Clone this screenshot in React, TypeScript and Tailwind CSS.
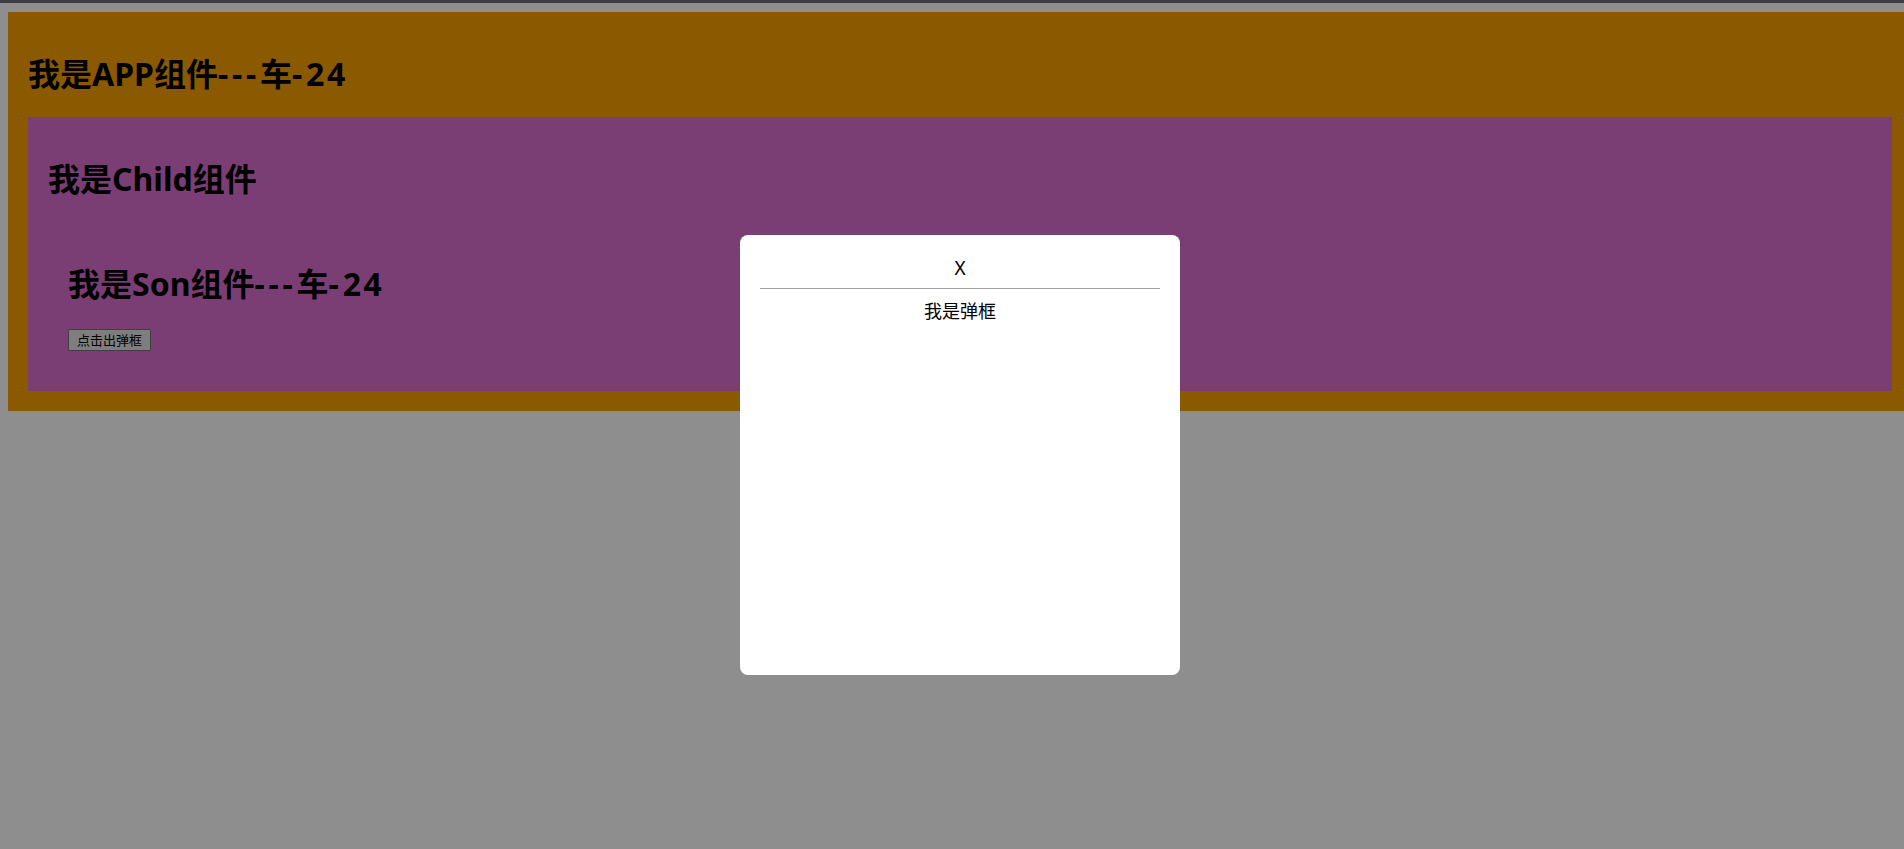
import React from 'react';

const font = { fontFamily: '"Noto Sans", "Noto Sans CJK SC", sans-serif' };

// the reference font draws hyphens and digits wider than Noto Sans does
const Wide: React.FC<{ children: React.ReactNode; dash?: boolean }> = ({ children, dash }) => (
  <span className={dash ? 'tracking-[3.8px]' : 'tracking-[2.6px]'}>{children}</span>
);

const Heading: React.FC<{ children: React.ReactNode }> = ({ children }) => (
  <h1 className="my-[21.44px] text-[32px] leading-[42px] font-bold text-black">{children}</h1>
);

const Son: React.FC = () => (
  <div className="p-[20px]">
    <Heading>
      我是Son组件<Wide dash>---</Wide>车<Wide dash>-</Wide><Wide>24</Wide>
    </Heading>
    <button className="h-[22px] px-[8px] text-[13px] leading-[20px] text-black bg-[#7e7e7e] border border-[#3f3f3f] rounded-[2px]">
      点击出弹框
    </button>
  </div>
);

const Child: React.FC = () => (
  <div className="bg-[#7a3e74] p-[20px]">
    <Heading>我是Child组件</Heading>
    <Son />
  </div>
);

const Modal: React.FC = () => (
  <div className="fixed left-[740px] top-[235px] w-[440px] h-[440px] bg-white rounded-[8px] p-[20px] text-center text-black">
    <div className="pt-[1px] text-[19px] leading-[24px]">X</div>
    <hr className="my-[8px] border-0 border-t border-[#a3a3a3]" />
    <p className="pt-[2px] text-[18px] leading-[24px]">我是弹框</p>
  </div>
);

export default function App() {
  return (
    <div className="min-h-screen bg-[#8e8e8e] overflow-hidden" style={font}>
      <div className="h-[3px] bg-[#3c3e44]" />
      <div className="pt-[9px] pl-[8px]">
        <div className="bg-[#8b5a00] pt-[20px] pb-[20px] pl-[20px] pr-[12px]">
          <Heading>
            我是APP组件<Wide dash>---</Wide>车<Wide dash>-</Wide><Wide>24</Wide>
          </Heading>
          <Child />
        </div>
      </div>
      <Modal />
    </div>
  );
}
